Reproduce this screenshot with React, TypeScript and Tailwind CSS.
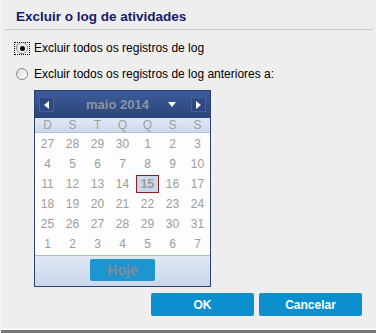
import React from 'react';

const weeks: number[][] = [
  [27, 28, 29, 30, 1, 2, 3],
  [4, 5, 6, 7, 8, 9, 10],
  [11, 12, 13, 14, 15, 16, 17],
  [18, 19, 20, 21, 22, 23, 24],
  [25, 26, 27, 28, 29, 30, 31],
  [1, 2, 3, 4, 5, 6, 7],
];

const weekdays = ['D', 'S', 'T', 'Q', 'Q', 'S', 'S'];

const Radio: React.FC<{ checked?: boolean; label: string }> = ({ checked, label }) => (
  <label className="flex items-center h-[20px]">
    <span
      className={
        checked
          ? 'ml-[13px] w-[16px] h-[13px] flex items-center justify-center border border-dotted border-black'
          : 'ml-[13px] w-[16px] h-[13px] flex items-center justify-center'
      }
    >
      <span className="w-[12px] h-[12px] rounded-full border border-[#8a8a8a] bg-gradient-to-br from-[#dcdcdc] to-white flex items-center justify-center">
        {checked && <span className="w-[5px] h-[5px] rounded-full bg-black" />}
      </span>
    </span>
    <span className="ml-[4px] text-[12px] text-black">{label}</span>
  </label>
);

const ArrowButton: React.FC<{ dir: 'left' | 'right' }> = ({ dir }) => (
  <div className="w-[15px] h-[15px] bg-[#2d4884] border border-[#45619d] flex items-center justify-center">
    <svg width="5" height="8" viewBox="0 0 5 8">
      {dir === 'left' ? <path d="M5 0 L0 4 L5 8 Z" fill="#fff" /> : <path d="M0 0 L5 4 L0 8 Z" fill="#fff" />}
    </svg>
  </div>
);

const Calendar: React.FC = () => (
  <div className="ml-[33px] w-[177px] border border-[#2b3f72] bg-[#fdfdfd]">
    {/* cabeçalho */}
    <div className="h-[27px] bg-gradient-to-b from-[#3e5c9a] to-[#2a4477] flex items-center px-[4px]">
      <ArrowButton dir="left" />
      <div className="ml-[32px] text-[13px] font-bold text-[#8b93a3] leading-none">maio 2014</div>
      <svg className="ml-[19px]" width="8" height="5" viewBox="0 0 8 5">
        <path d="M0 0 L8 0 L4 5 Z" fill="#fff" />
      </svg>
      <div className="ml-auto">
        <ArrowButton dir="right" />
      </div>
    </div>

    <div className="h-[15px] grid grid-cols-7 bg-gradient-to-b from-[#e2e9f4] to-[#ccd9ec] border-b border-[#b4c3dc]">
      {weekdays.map((d, i) => (
        <div key={i} className="text-center text-[12px] leading-[14px] text-[#a0a0a0]">
          {d}
        </div>
      ))}
    </div>

    <div className="pt-[1px] pb-[1px]">
      {weeks.map((week, wi) => (
        <div key={wi} className="grid grid-cols-7 h-[20px]">
          {week.map((day, di) => {
            const today = wi === 2 && di === 4;
            return (
              <div key={di} className="flex items-center justify-center">
                {today ? (
                  <div className="w-[23px] h-[18px] border border-[#8c1d1d] bg-[#c9d7ea] flex items-center justify-center text-[12px] font-bold text-[#9a9a9a]">
                    {day}
                  </div>
                ) : (
                  <span className="text-[12px] text-[#9c9c9c]">{day}</span>
                )}
              </div>
            );
          })}
        </div>
      ))}
    </div>

    <div className="h-[31px] border-t border-[#a9b9d6] bg-gradient-to-b from-[#e0e8f4] to-[#c8d7eb] flex justify-center pt-[3px]">
      <div className="w-[65px] h-[22px] rounded-[2px] bg-[#1f95cf] flex items-center justify-center text-[14px] font-bold text-[#7e8c98]">
        Hoje
      </div>
    </div>
  </div>
);

export default function App() {
  return (
    <div
      className="w-[376px] h-[333px] bg-[#eeeeee] flex flex-col border-l border-[#f6f6f6] relative overflow-hidden"
      style={{ fontFamily: '"Liberation Sans", Arial, sans-serif' }}
    >
      <div className="h-[30px] mr-[3px] ml-[4px] border-b border-[#c9c9c9] pt-[9px] pl-[11px]">
        <h1 className="text-[13.5px] leading-[16px] font-bold text-[#15196e]">Excluir o log de atividades</h1>
      </div>

      <div className="mt-[8px]">
        <Radio checked label="Excluir todos os registros de log" />
      </div>
      <div className="mt-[6px]">
        <Radio label="Excluir todos os registros de log anteriores a:" />
      </div>

      <div className="mt-[6px]">
        <Calendar />
      </div>

      <div className="mt-[6px] flex justify-end gap-[5px] pr-[14px]">
        <button className="w-[103px] h-[23px] rounded-[2px] bg-[#0b8fce] text-white text-[12px] font-bold">OK</button>
        <button className="w-[103px] h-[23px] rounded-[2px] bg-[#0b8fce] text-white text-[12px] font-bold">Cancelar</button>
      </div>

      <div className="mt-auto h-[2px] bg-[#f6f6f6]" />
      <div className="h-[3px] bg-[#777777]" />
    </div>
  );
}
